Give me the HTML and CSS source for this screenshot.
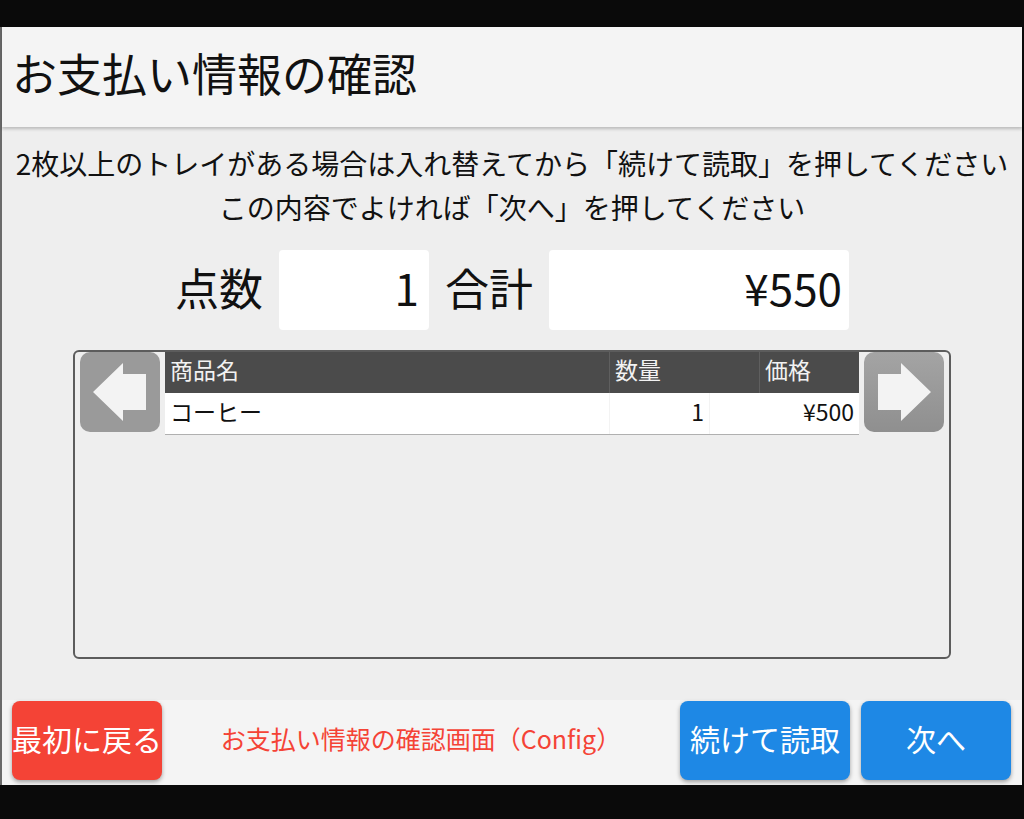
FILE: index.html
```html
<!DOCTYPE html>
<html lang="ja">
<head>
    <meta charset="UTF-8">
    <title>お支払い情報の確認</title>
    <link rel="stylesheet" href="styles.css">
</head>
<body>
    <div class="window">
        <header class="title-bar">
            <h1>お支払い情報の確認</h1>
        </header>
        <main class="content">
            <div class="guide">
                <p>2枚以上のトレイがある場合は入れ替えてから「続けて読取」を押してください</p>
                <p>この内容でよければ「次へ」を押してください</p>
            </div>
            <div class="summary">
                <span class="summary-label">点数</span>
                <span class="summary-box count">1</span>
                <span class="summary-label">合計</span>
                <span class="summary-box total">¥550</span>
            </div>
            <div class="list-frame">
                <button class="page-btn" type="button">
                    <svg viewBox="0 0 80 80" width="80" height="80"><polygon points="13,40 43,11 43,22 66,22 66,58 43,58 43,69" fill="#f3f3f3"/></svg>
                </button>
                <div class="item-table">
                    <div class="item-head">
                        <div class="cell">商品名</div>
                        <div class="cell">数量</div>
                        <div class="cell">価格</div>
                    </div>
                    <div class="item-row">
                        <div class="cell">コーヒー</div>
                        <div class="cell num">1</div>
                        <div class="cell num">¥500</div>
                    </div>
                </div>
                <button class="page-btn grad" type="button">
                    <svg viewBox="0 0 80 80" width="80" height="80"><polygon points="67,40 37,11 37,22 14,22 14,58 37,58 37,69" fill="#f3f3f3"/></svg>
                </button>
            </div>
        </main>
        <footer class="footer">
            <button class="btn btn-red" type="button">最初に戻る</button>
            <span class="screen-name">お支払い情報の確認画面（Config）</span>
            <button class="btn btn-blue wide" type="button">続けて読取</button>
            <button class="btn btn-blue" type="button">次へ</button>
        </footer>
    </div>
</body>
</html>
```

FILE: styles.css
```css
body {
    margin: 0;
    background-color: #0a0a0a;
    font-family: "Noto Sans CJK JP", "Noto Sans", sans-serif;
    color: #111;
    overflow: hidden;
}
.window {
    margin-top: 27px;
    width: 1020px;
    height: 758px;
    border-left: 2px solid #6a6a6a;
    background-color: #eeeeee;
    display: flex;
    flex-direction: column;
}
.title-bar {
    height: 100px;
    background-color: #f4f4f4;
    display: flex;
    align-items: center;
    padding-left: 10px;
    box-shadow: 0 2px 3px rgba(0, 0, 0, 0.22);
    position: relative;
    z-index: 1;
}
h1 {
    margin: 0;
    font-size: 45px;
    font-weight: normal;
    line-height: 1;
    padding-bottom: 9px;
}
.content {
    flex: 1;
    display: flex;
    flex-direction: column;
    align-items: center;
    padding-top: 14px;
}
.guide p {
    margin: 0;
    font-size: 28px;
    line-height: 44px;
    text-align: center;
    white-space: nowrap;
}
.summary {
    margin-top: 21px;
    display: flex;
    align-items: center;
    gap: 16px;
}
.summary-label {
    font-size: 44px;
    line-height: 1;
    padding-bottom: 7px;
}
.summary-box {
    height: 80px;
    background-color: #fff;
    border-radius: 4px;
    font-size: 44px;
    line-height: 1;
    display: flex;
    align-items: center;
    justify-content: flex-end;
    padding-right: 7px;
    padding-bottom: 7px;
    box-sizing: border-box;
}
.count {
    width: 150px;
    padding-right: 10px;
}
.total {
    width: 300px;
}
.list-frame {
    margin-top: 20px;
    width: 878px;
    height: 309px;
    box-sizing: border-box;
    border: 2px solid #5c5c5c;
    border-radius: 6px;
    display: flex;
    align-items: flex-start;
    gap: 5px;
    padding: 0 5px;
}
.page-btn {
    width: 80px;
    height: 80px;
    padding: 0;
    border: none;
    border-radius: 10px;
    background-color: #9a9a9a;
    display: block;
}
.page-btn svg {
    display: block;
}
.page-btn.grad {
    background: linear-gradient(#a4a4a4, #8f8f8f);
}
.item-table {
    flex: 1;
    font-size: 23px;
}
.item-head, .item-row {
    display: grid;
    height: 41px;
}
.item-head {
    grid-template-columns: 444px 150px 1fr;
    background-color: #4b4b4b;
    color: #f2f2f2;
}
.item-row {
    grid-template-columns: 444px 100px 1fr;
    background-color: #fff;
    border-bottom: 1px solid #b0b0b0;
}
.cell {
    display: flex;
    align-items: center;
    padding: 0 5px 6px;
    line-height: 1;
}
.item-row .cell {
    padding-bottom: 4px;
}
.item-head .cell + .cell {
    border-left: 1px solid #5f5f5f;
}
.item-row .cell + .cell {
    border-left: 1px solid #f3f3f3;
}
.num {
    justify-content: flex-end;
}
.footer {
    height: 85px;
    background-color: #f4f4f4;
    display: flex;
    align-items: flex-start;
    padding: 1px 11px 0 10px;
    gap: 11px;
    box-sizing: border-box;
}
.btn {
    width: 150px;
    height: 79px;
    border: none;
    border-radius: 8px;
    color: #fff;
    font-family: "Noto Sans CJK JP", sans-serif;
    font-size: 30px;
    line-height: 1;
    padding: 0 0 6px;
    box-shadow: 0 2px 4px rgba(0, 0, 0, 0.35);
    white-space: nowrap;
}
.btn-red {
    background-color: #f44336;
}
.btn-blue {
    background-color: #1e88e5;
}
.wide {
    width: 170px;
    margin-left: 2px;
}
.screen-name {
    flex: 1;
    text-align: center;
    color: #f44336;
    font-size: 25px;
    line-height: 75px;
    padding-left: 2px;
}
```
